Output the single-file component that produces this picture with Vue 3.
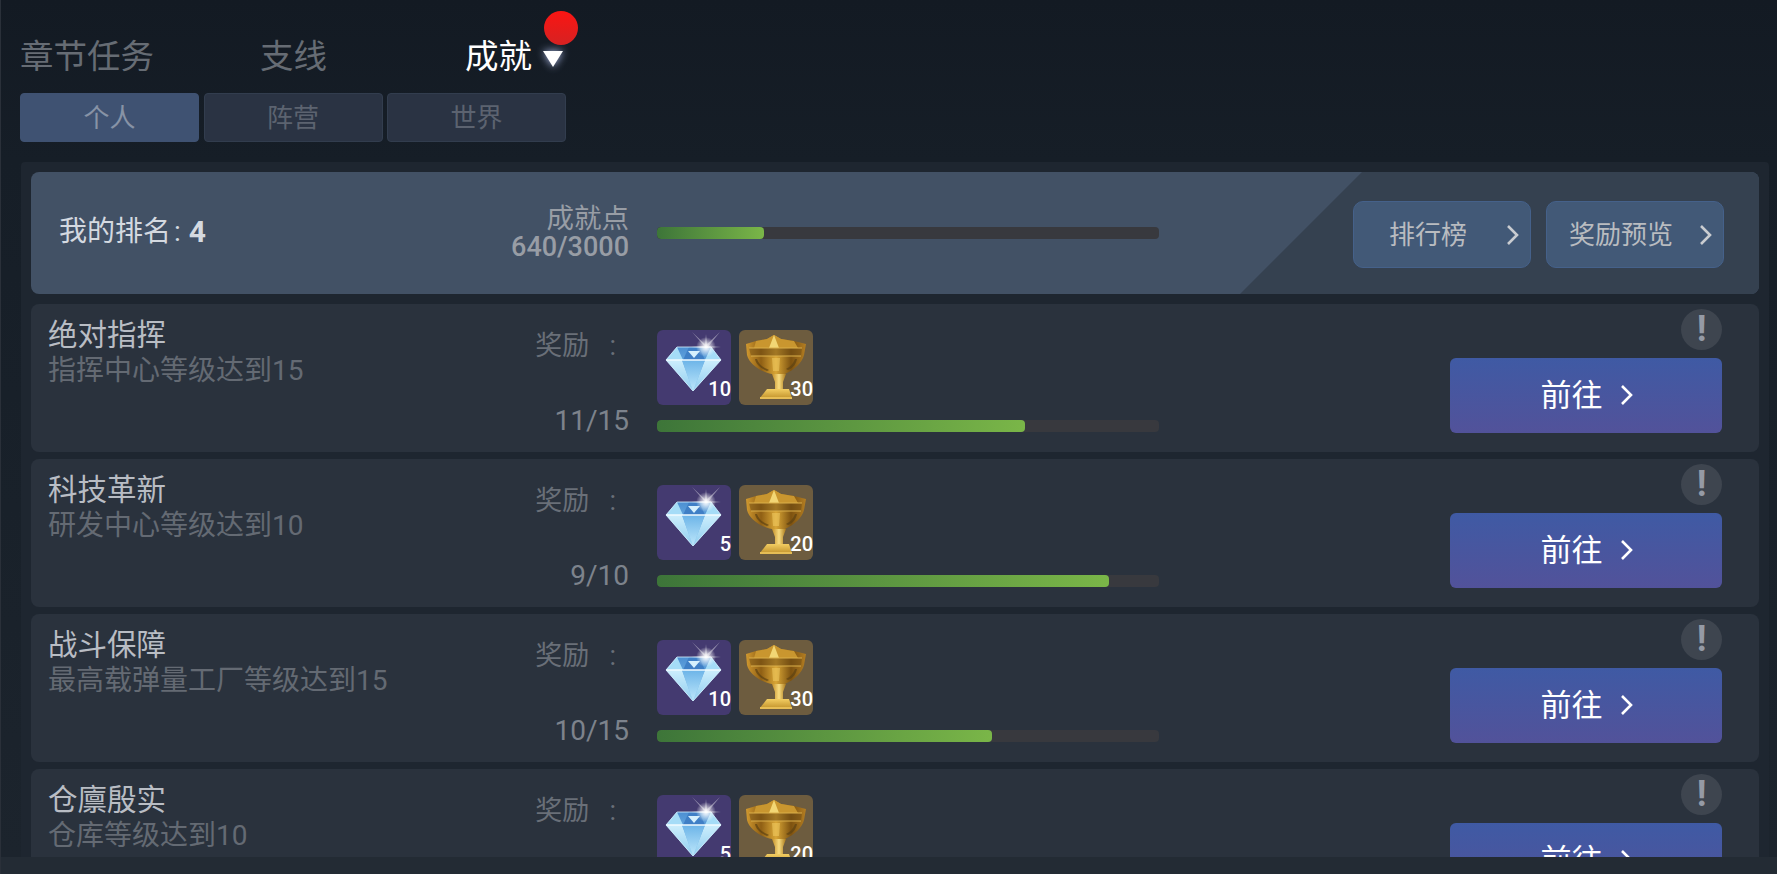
<script setup>
const mainTabs = [
  { name: "章节任务", cls: "tab-chapter" },
  { name: "支线", cls: "tab-side" },
  { name: "成就", cls: "tab-achieve", active: true },
];
const subTabs = ["个人", "阵营", "世界"];

const tasks = [
  { title: "绝对指挥", desc: "指挥中心等级达到15", gems: 10, cups: 30, now: 11, max: 15 },
  { title: "科技革新", desc: "研发中心等级达到10", gems: 5, cups: 20, now: 9, max: 10 },
  { title: "战斗保障", desc: "最高载弹量工厂等级达到15", gems: 10, cups: 30, now: 10, max: 15 },
  { title: "仓廪殷实", desc: "仓库等级达到10", gems: 5, cups: 20, now: 7, max: 10 },
];

const pct = (now, max) => (now / max) * 100 + "%";
</script>

<template>
  <div class="page">
    <div class="main-tabs">
      <div v-for="t in mainTabs" :key="t.name" class="main-tab" :class="[t.cls, { active: t.active }]">
        {{ t.name }}
        <template v-if="t.active">
          <svg class="tri" width="22" height="18" viewBox="0 0 22 18"><path d="M1 1h20L11 17z" fill="#fff" /></svg>
          <span class="red-dot"></span>
        </template>
      </div>
    </div>

    <div class="sub-tabs">
      <div v-for="(s, i) in subTabs" :key="s" class="sub-tab" :class="{ active: i === 0 }">{{ s }}</div>
    </div>

    <div class="panel">
      <div class="rank-card">
        <div class="rank-name"><span>我的排名</span><i>:</i><b>4</b></div>
        <div class="rank-label">
          <div>成就点</div>
          <div class="rank-num">640/3000</div>
        </div>
        <div class="bar rank-bar"><div class="fill" :style="{ width: pct(640, 3000) }"></div></div>
        <div class="rank-btns">
          <div class="rank-btn">
            <span>排行榜</span>
            <svg width="14" height="22" viewBox="0 0 14 22"><path d="M2 2l9 9-9 9" fill="none" stroke="#c9ccd0" stroke-width="2.6" /></svg>
          </div>
          <div class="rank-btn">
            <span>奖励预览</span>
            <svg width="14" height="22" viewBox="0 0 14 22"><path d="M2 2l9 9-9 9" fill="none" stroke="#c9ccd0" stroke-width="2.6" /></svg>
          </div>
        </div>
      </div>

      <div v-for="task in tasks" :key="task.title" class="row">
        <div class="info">
          <div class="title">{{ task.title }}</div>
          <div class="desc">{{ task.desc }}</div>
        </div>
        <div class="body">
          <div class="label reward-label">奖励&nbsp;&nbsp;&nbsp;:</div>
          <div class="rewards">
            <div class="item gem">
              <svg width="74" height="75" viewBox="0 0 74 75">
                <defs>
                  <linearGradient id="gemTop" x1="0" y1="0" x2="0" y2="1">
                    <stop offset="0" stop-color="#4c8fd2" />
                    <stop offset="1" stop-color="#8fcdf2" />
                  </linearGradient>
                  <linearGradient id="gemCore" x1="0" y1="0" x2="0" y2="1">
                    <stop offset="0" stop-color="#6cb4e8" />
                    <stop offset="1" stop-color="#bfe8fb" />
                  </linearGradient>
                  <linearGradient id="gemSide" x1="0" y1="0" x2="0" y2="1">
                    <stop offset="0" stop-color="#cdeefc" />
                    <stop offset="1" stop-color="#8fcdf0" />
                  </linearGradient>
                  <radialGradient id="flare">
                    <stop offset="0" stop-color="#fff" />
                    <stop offset=".35" stop-color="#fff" stop-opacity=".7" />
                    <stop offset="1" stop-color="#fff" stop-opacity="0" />
                  </radialGradient>
                </defs>
                <path d="M20 17h34l10 13-28 31L9 30z" fill="url(#gemTop)" />
                <path d="M9 30h16l11 31z" fill="url(#gemSide)" />
                <path d="M64 30H48L36 61z" fill="url(#gemSide)" />
                <path d="M25 30h23L36 61z" fill="url(#gemCore)" />
                <path d="M20 17l6 13H9z" fill="#a5dcf7" />
                <path d="M54 17l-6 13h16z" fill="#a5dcf7" />
                <path d="M26 30l6-13h10l6 13z" fill="#3f7fc6" />
                <path d="M31 21h12l-6 7z" fill="#d5f0fd" />
                <path d="M9 30h55" stroke="#f2fbff" stroke-width="1.5" />
                <path d="M9 30l11-13h34l10 13-28 31z" fill="none" stroke="#d7f2ff" stroke-width=".8" />
                <path d="M35 2l15 14-1 2zM63 2L48 16l2 2z" fill="#fff" fill-opacity=".4" />
                <path d="M49 4l1 13-2 0zM34 17l15-1 15 1-15 1z" fill="#fff" fill-opacity=".55" />
                <circle cx="49" cy="17" r="10" fill="url(#flare)" />
              </svg>
              <span class="count">{{ task.gems }}</span>
            </div>
            <div class="item cup">
              <svg width="74" height="75" viewBox="0 0 74 75">
                <defs>
                  <linearGradient id="cupGold" x1="0" y1="0" x2="1" y2="0">
                    <stop offset="0" stop-color="#d29a30" />
                    <stop offset=".25" stop-color="#8f5f14" />
                    <stop offset=".5" stop-color="#d9a636" />
                    <stop offset=".75" stop-color="#7d5210" />
                    <stop offset="1" stop-color="#b47e22" />
                  </linearGradient>
                  <linearGradient id="cupStem" x1="0" y1="0" x2="1" y2="0">
                    <stop offset="0" stop-color="#c48f28" />
                    <stop offset=".5" stop-color="#f8dc80" />
                    <stop offset="1" stop-color="#a87618" />
                  </linearGradient>
                  <linearGradient id="cupBase" x1="0" y1="0" x2="0" y2="1">
                    <stop offset="0" stop-color="#f2cd62" />
                    <stop offset="1" stop-color="#c4952e" />
                  </linearGradient>
                </defs>
                <path d="M7 14l10-3 11-2 7-4 7 4 13 2 12 3-2 11c-2 8-10 15-19 19H33C22 42 10 34 8 25z" fill="url(#cupGold)" />
                <path d="M17 11l11-2 7-4v13H15zM42 9l13 2 4 7H35V5z" fill="#c9962f" />
                <path d="M35 5l5 13H30z" fill="#f2d674" />
                <path d="M10 18h53l-1 8H12z" fill="#6b4a14" fill-opacity=".5" />
                <path d="M10 18h53M12 26h50" stroke="#dcb04a" stroke-width="1.1" />
                <path d="M18 29c2 6 7 9 12 11l-2 1c-6-3-11-6-12-12zM56 29c-2 5-5 8-9 10l2 1c5-2 8-6 9-11z" fill="#5d4212" fill-opacity=".7" />
                <path d="M33 28h8l-1 13h-6z" fill="#f3cf68" fill-opacity=".5" />
                <path d="M33 44h14l-3 8v7h-8v-7z" fill="url(#cupStem)" />
                <path d="M28 59h22l3 9H21z" fill="url(#cupBase)" />
                <path d="M21 68h32" stroke="#e6bd55" stroke-width="2" />
              </svg>
              <span class="count">{{ task.cups }}</span>
            </div>
          </div>
          <div class="label progress-label">{{ task.now }}/{{ task.max }}</div>
          <div class="bar task-bar"><div class="fill" :style="{ width: pct(task.now, task.max) }"></div></div>
        </div>
        <div class="action">
          <div class="tip">!</div>
          <div class="go">
            <span>前往</span>
            <svg width="14" height="22" viewBox="0 0 14 22"><path d="M2 2l9 9-9 9" fill="none" stroke="#fff" stroke-width="2.6" /></svg>
          </div>
        </div>
      </div>
    </div>
  </div>
</template>

<style>
html,
body {
  margin: 0;
  background: #222a33;
  overflow: hidden;
}
</style>

<style scoped>
.page {
  width: 1777px;
  height: 874px;
  overflow: hidden;
  box-sizing: border-box;
  padding-top: 37px;
  border-left: 1px solid #2a3039;
  background: linear-gradient(#131a23 0, #161e27 160px, #1c242d 857px, #232b34 857px);
  font-family: Roboto, "Noto Sans CJK SC", sans-serif;
  color: #7d838c;
}

.main-tabs {
  display: flex;
  height: 40px;
  padding-left: 19px;
}
.main-tab {
  position: relative;
  font-size: 33.5px;
  line-height: 40px;
  color: #666c74;
  white-space: nowrap;
}
.tab-chapter {
  width: 240px;
}
.tab-side {
  width: 205px;
}
.main-tab.active {
  color: #fff;
}
.tri {
  position: absolute;
  left: 77px;
  top: 13px;
  filter: drop-shadow(0 0 4px rgba(190, 205, 255, 0.9));
}
.red-dot {
  position: absolute;
  left: 79px;
  top: -26px;
  width: 34px;
  height: 34px;
  border-radius: 50%;
  background: linear-gradient(#fa1513, #d62222);
}

.sub-tabs {
  display: flex;
  gap: 4.5px;
  margin: 16px 0 20px 19px;
}
.sub-tab {
  width: 179px;
  height: 49px;
  box-sizing: border-box;
  border: 1px solid #323d4e;
  border-radius: 4px;
  background: #2a3343;
  font-size: 26px;
  line-height: 48px;
  text-align: center;
  color: #5c6370;
}
.sub-tab.active {
  background: #3f5272;
  border-color: #3f5272;
  color: #8793a6;
}

.panel {
  width: 1748px;
  height: 695px;
  margin-left: 20px;
  box-sizing: border-box;
  padding: 10px 10px 0;
  overflow: hidden;
  background: #1e2630;
  border-radius: 4px 4px 0 0;
  display: flex;
  flex-direction: column;
  gap: 7px;
}

.rank-card {
  position: relative;
  flex: none;
  height: 122px;
  margin-bottom: 3px;
  display: flex;
  align-items: center;
  padding-left: 28px;
  background: #425165;
  border-radius: 8px;
  overflow: hidden;
}
.rank-card::before {
  content: "";
  position: absolute;
  top: 0;
  right: 0;
  bottom: 0;
  width: 519px;
  background: #354150;
  clip-path: polygon(122px 0, 100% 0, 100% 100%, 0 100%);
}
.rank-name {
  position: relative;
  width: 370px;
  display: flex;
  font-size: 28px;
  line-height: 36px;
  color: #d4d9e0;
  margin-top: -3px;
}
.rank-name i {
  font-style: normal;
  margin: 0 8px 0 3px;
}
.rank-name b {
  font-size: 30px;
  font-weight: 700;
}
.rank-label {
  position: relative;
  width: 200px;
  text-align: right;
  font-size: 27.5px;
  line-height: 29px;
  color: #989da5;
  margin-right: 28px;
}
.rank-num {
  font-size: 27px;
  font-weight: 500;
}
.rank-btns {
  position: relative;
  display: flex;
  gap: 15px;
  margin-left: auto;
  margin-right: 35px;
  margin-top: 3px;
}
.rank-btn {
  width: 178px;
  height: 67px;
  box-sizing: border-box;
  display: flex;
  align-items: center;
  padding-right: 10px;
  background: #425977;
  border: 1px solid #45618a;
  border-radius: 10px;
  font-size: 26px;
  color: #b9bcc0;
}
.rank-btn span {
  flex: 1;
  text-align: center;
  margin-top: -4px;
  padding-right: 4px;
}

.bar {
  height: 12px;
  border-radius: 4px;
  background: #38393e;
  overflow: hidden;
}
.rank-bar {
  position: relative;
  width: 502px;
}
.fill {
  height: 100%;
  border-radius: 4px;
  background: linear-gradient(90deg, #3d7539, #7ab648);
}

.row {
  flex: none;
  height: 148px;
  display: flex;
  padding-left: 17px;
  box-sizing: border-box;
  background: #2a323d;
  border-radius: 8px;
}
.info {
  width: 381px;
  flex: none;
  padding-top: 13px;
}
.title {
  font-size: 29.5px;
  line-height: 37px;
  color: #b9bdc4;
}
.desc {
  font-size: 28px;
  line-height: 34px;
  color: #646a73;
  white-space: nowrap;
}
.body {
  flex: none;
  padding-top: 26px;
  display: grid;
  grid-template-columns: 200px 502px;
  grid-template-rows: 75px 32px;
  column-gap: 28px;
}
.label {
  font-size: 28px;
  line-height: 32px;
  text-align: right;
  color: #696f78;
}
.reward-label {
  font-size: 27px;
  padding-right: 13px;
}
.progress-label {
  color: #7d838c;
}
.rewards {
  display: flex;
  gap: 8px;
}
.item {
  position: relative;
  width: 74px;
  height: 75px;
  border-radius: 6px;
}
.item svg {
  display: block;
}
.gem {
  background: #443a70;
}
.cup {
  background: #6d5c3f;
}
.count {
  position: absolute;
  right: 0;
  bottom: 5px;
  font-size: 20px;
  font-weight: 500;
  line-height: 22px;
  color: #fff;
}
.task-bar {
  margin-top: 15px;
}
.action {
  margin-left: auto;
  padding: 5px 37px 0 0;
  display: flex;
  flex-direction: column;
  align-items: flex-end;
  gap: 8px;
}
.tip {
  width: 41px;
  height: 41px;
  border-radius: 50%;
  background: #3e454f;
  color: #959aa5;
  font-size: 36px;
  font-weight: 700;
  line-height: 41px;
  text-align: center;
}
.go {
  width: 272px;
  height: 75px;
  box-sizing: border-box;
  padding-left: 2px;
  display: flex;
  align-items: center;
  justify-content: center;
  gap: 17px;
  border-radius: 6px;
  background: linear-gradient(#3f5aa4, #52529a);
  color: #fff;
  font-size: 31px;
}
.go span {
  margin-top: -6px;
}
.go svg {
  margin-top: -2px;
}
</style>
